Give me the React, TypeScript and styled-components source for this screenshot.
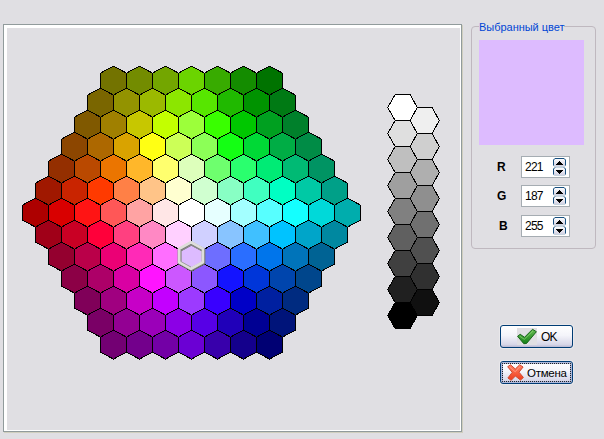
import React from 'react';
import styled, { createGlobalStyle } from 'styled-components';

const Global = createGlobalStyle`
  html, body { margin: 0; padding: 0; }
  body { background: #e0dfe3; overflow: hidden; }
  * { box-sizing: border-box; }
`;

const Dialog = styled.main`
  width: 604px;
  height: 439px;
  padding: 24px 8px 6px 3px;
  display: flex;
  align-items: flex-start;
  gap: 9px;
  background: #e0dfe3;
  font-family: "Liberation Sans", Arial, sans-serif;
  font-size: 11px;
  color: #000;
`;

const Palette = styled.section`
  width: 459px;
  height: 408px;
  border: 1px solid #919b9c;
  box-shadow: inset 3px 3px 0 #fff, inset -1px -1px 0 #fff, 1px 1px 0 #d0cfbf;
`;

const PaletteCanvas = styled.svg`
  display: block;
  width: 457px;
  height: 406px;
`;

const Side = styled.aside`
  display: flex;
  flex-direction: column;
  width: 125px;
  padding-top: 2px;
`;

const Group = styled.fieldset`
  margin: 0;
  padding: 13px 0 0 7px;
  min-width: 0;
  width: 125px;
  height: 223px;
  border: 1px solid #bfb8bf;
  border-radius: 4px;
`;

const Legend = styled.legend`
  float: left;
  margin: -20px 0 0 0;
  padding: 0;
  height: 14px;
  line-height: 14px;
  background: #e0dfe3;
  color: #0046d5;
  white-space: nowrap;
  letter-spacing: -0.03px;
`;

const Swatch = styled.div`
  clear: both;
  width: 105px;
  height: 105px;
  background: #ddbbff;
`;

const Channels = styled.div`
  display: flex;
  flex-direction: column;
  padding-top: 11px;
`;

const Channel = styled.label<{ $gap: number; $indent: number }>`
  display: flex;
  align-items: center;
  width: 91px;
  height: 22px;
  margin-bottom: ${p => p.$gap}px;
  padding-left: ${p => p.$indent}px;
  justify-content: space-between;
`;

const ChannelName = styled.b`
  font-size: 12px;
  line-height: 22px;
`;

const Field = styled.span`
  display: flex;
  justify-content: space-between;
  width: 49px;
  height: 22px;
  padding: 1px 3px 0 3px;
  border: 1px solid #a5acb2;
  background: #fff;
  font-size: 12px;
  line-height: 18px;
  letter-spacing: -0.75px;
`;

const Actions = styled.div`
  display: flex;
  flex-direction: column;
  gap: 13px;
  padding: 76px 0 0 29px;
`;

const Button = styled.button<{ $focused?: boolean }>`
  display: flex;
  align-items: center;
  width: 73px;
  height: 23px;
  padding: 0 0 0 ${p => (p.$focused ? 6 : 16)}px;
  gap: ${p => (p.$focused ? 3 : 4)}px;
  border: 1px solid #003c74;
  border-radius: 3px;
  background: linear-gradient(#fff 0%, #f4f4fa 45%, #d8d7e8 88%, #b9b8d2 100%);
  box-shadow: 0 0 0 1px #e9e8eb${p => (p.$focused ? ', inset 0 0 0 2px #aeb9dc' : '')};
  outline: ${p => (p.$focused ? '1px dotted #222' : 'none')};
  outline-offset: -3px;
  font: ${p => (p.$focused ? 11.5 : 12)}px "Liberation Sans", Arial, sans-serif;
  color: #000;
  letter-spacing: ${p => (p.$focused ? -0.25 : -0.9)}px;
  white-space: nowrap;
`;

const Icon = styled.svg`
  display: block;
  flex: none;
`;

const colours = [
  '737300 738c00 73a600 6bd400 38ab00 148c00 007300',
  '7a6600 939300 9bb900 8ce600 57e600 20b900 009300 007a14',
  '805900 a08000 c7c700 c3ff00 9cff3a 39ff00 00c700 00a020 00802b',
  '8c4600 ad6800 d9a300 ffff14 ccff57 8cff57 14ff14 00d936 00ad45 008c46',
  '942f00 ba4900 eb7500 ffb72a ffff6e ddffbb 6eff6e 2aff6e 00eb75 00ba74 009463',
  'a01800 c92400 ff3a00 ff8046 ffc488 ffffd0 d0ffd0 88ffc4 40ffc0 00ffc3 00c9a5 00a088',
  'ad0000 d90000 ff1414 ff5757 ffa3a3 ffe6e6 ffffff e6ffff a3ffff 57ffff 14ffff 00d9d9 00adad',
  'a00018 c90024 ff003a ff4080 ff88c4 ffd0ff d0d0ff 88c4ff 40c0ff 00c3ff 00a5c9 0088a0',
  '94002f ba0049 eb0075 ff2ab7 ff6eff ddbbff 6e6eff 2a6eff 0075eb 0074ba 006394',
  '8c0046 ad0068 d900a3 ff14ff cc57ff 8c57ff 1414ff 0036d9 0045ad 00468c',
  '800059 a00080 c700c7 c300ff 9c3aff 3900ff 0000c7 0020a0 002b80',
  '7a0066 930093 9b00b9 8c00e6 5700e6 2000b9 000093 00147a',
  '730073 73008c 7300a6 6b00d4 3800ab 14008c 000073',
].map(row => row.split(' '));

const greys = [
  ['ffffff', 'dfdfdf', 'bfbfbf', '9f9f9f', '808080', '606060', '404040', '202020', '000000'],
  ['efefef', 'cfcfcf', 'afafaf', '8f8f8f', '707070', '505050', '303030', '101010'],
];

const pointy = (x: number, y: number) =>
  `${x},${y} ${x + 13},${y + 7} ${x + 13},${y + 22} ${x},${y + 29} ${x - 13},${y + 22} ${x - 13},${y + 7}`;

const flat = (x: number, y: number) =>
  `${x},${y} ${x + 15},${y} ${x + 22},${y + 13} ${x + 15},${y + 26} ${x},${y + 26} ${x - 7.5},${y + 13}`;

function HexPalette() {
  return (
    <PaletteCanvas viewBox="3.5 24.5 457 406" aria-label="Палитра">
      <g stroke="#000" strokeWidth="1" shapeRendering="crispEdges">
        {colours.map((row, r) =>
          row.map((c, i) => (
            <polygon
              key={`${r}-${i}`}
              fill={`#${c}`}
              points={pointy(191 - (row.length - 1) * 13 + i * 26, 65.6 + r * 22)}
            />
          )),
        )}
        {greys[1].map((c, i) => (
          <polygon key={c} fill={`#${c}`} points={flat(416.7, 107 + i * 26)} />
        ))}
        {greys[0].map((c, i) => (
          <polygon key={c} fill={`#${c}`} points={flat(394.7, 94 + i * 26)} />
        ))}
      </g>
      <g fill="none" strokeLinejoin="round">
        <polygon points="191,243 203,249.5 203,262.5 191,269 179,262.5 179,249.5" stroke="#747474" strokeWidth="3.8" />
        <polygon points="190.5,241.7 202.4,248.3 202.4,261.7 190.5,268.2 178.7,261.7 178.7,248.3" stroke="#dededa" strokeWidth="2.8" />
        <path d="M181 250.200 190.500 244.500 201 250.200" stroke="#8c8c8c" strokeWidth="1" />
        <path d="M180.700 250.500v10.700L190.500 266.600" stroke="#999" strokeWidth=".8" />
      </g>
    </PaletteCanvas>
  );
}

function Spinner() {
  return (
    <Icon width="13" height="18" viewBox="0 0 13 18">
      <defs>
        <linearGradient id="spin" x1="0" y1="0" x2="0" y2="1">
          <stop offset="0" stopColor="#fff" />
          <stop offset="1" stopColor="#cfcee0" />
        </linearGradient>
      </defs>
      <rect x=".5" y=".5" width="12" height="8" rx="1.5" fill="url(#spin)" stroke="#c6d3df" />
      <rect x=".5" y="9.5" width="12" height="8" rx="1.5" fill="url(#spin)" stroke="#c6d3df" />
      <path d="M.5 7.500V2L2 .5h9L12.500 2v5.500M.5 16.500v-5.500L2 9.500M12.500 16.500v-5.500L11 9.500" fill="none" stroke="#174f80" />
      <path d="M6 3h1v1h1v1h1v1h1v1H3V6h1V5h1V4h1zM3 12h7v1H9v1H8v1H7v1H6v-1H5v-1H4v-1H3z" fill="#000" shapeRendering="crispEdges" />
    </Icon>
  );
}

function CheckIcon() {
  return (
    <Icon width="20" height="17" viewBox="0 0 20 17">
      <defs>
        <linearGradient id="tick" x1="0" y1="0" x2="0" y2="1">
          <stop offset="0" stopColor="#69bd55" />
          <stop offset="1" stopColor="#138016" />
        </linearGradient>
      </defs>
      <path d="M0 0h20v17H0z" fill="#e0dfe3" />
      <path d="M.6 8.3 3.2 6.3l4.3 3L15.5 1.3l3.900 2.400L9.500 15.500l-2.700.2z" fill="url(#tick)" stroke="#18651b" strokeLinejoin="round" />
      <path d="m2.5 8 4.800 3.300 8.700-8.300" fill="none" stroke="#85cf70" strokeWidth=".8" />
    </Icon>
  );
}

function CrossIcon() {
  return (
    <Icon width="17" height="17" viewBox="0 0 17 17">
      <defs>
        <linearGradient id="cross" x1="0" y1="0" x2="0" y2="1">
          <stop offset="0" stopColor="#ff8265" />
          <stop offset="1" stopColor="#ee3c1c" />
        </linearGradient>
      </defs>
      <path
        d="M.7 2.700 3.500.8l4.800 4.200L12.700.8l3.400 2.200-4.100 5.200 4.400 5.300-2.900 2.600-5.100-4.100-4.200 4.300-3.300-2.300 4.300-5.600z"
        fill="url(#cross)"
        stroke="#d04a30"
        strokeLinejoin="round"
      />
      <path d="m2.500 2.800 5.700 5L13 2.500" fill="none" stroke="#ffa58f" strokeWidth=".7" />
    </Icon>
  );
}

const channels = [
  { name: 'R', value: 221, gap: 7, indent: 18 },
  { name: 'G', value: 187, gap: 8, indent: 18 },
  { name: 'B', value: 255, gap: 0, indent: 20 },
];

export default function App() {
  return (
    <>
      <Global />
      <Dialog>
        <Palette>
          <HexPalette />
        </Palette>
        <Side>
          <Group>
            <Legend>Выбранный цвет</Legend>
            <Swatch />
            <Channels>
              {channels.map(c => (
                <Channel key={c.name} $gap={c.gap} $indent={c.indent}>
                  <ChannelName>{c.name}</ChannelName>
                  <Field>
                    {c.value}
                    <Spinner />
                  </Field>
                </Channel>
              ))}
            </Channels>
          </Group>
          <Actions>
            <Button>
              <CheckIcon />
              OK
            </Button>
            <Button $focused>
              <CrossIcon />
              Отмена
            </Button>
          </Actions>
        </Side>
      </Dialog>
    </>
  );
}
